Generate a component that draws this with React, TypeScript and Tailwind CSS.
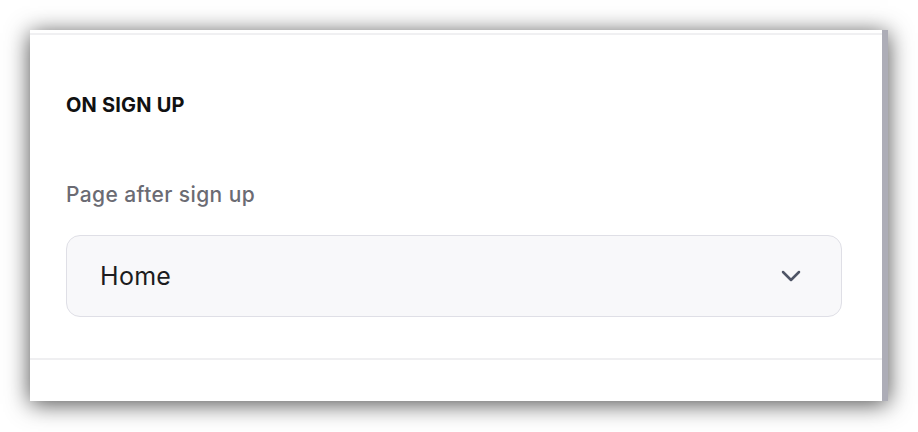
export default function App() {
  return (
    <div className="h-[432px] w-[918px] bg-white pl-[30px] pt-[30px] font-['Inter',sans-serif]">
      <div className="flex h-[371px] w-[858px] shadow-[0_3px_22px_rgba(0,0,0,0.7)]">
        {/* card body */}
        <div className="flex w-[852px] flex-col bg-white">
          <div className="mt-[3px] h-[2px] bg-[#f0f0f2]" />

          <section className="px-[36px] pt-[58px]">
            <h2 className="text-[20px] font-bold leading-6 tracking-[0.2px] text-[#111111]">
              ON SIGN UP
            </h2>

            <label className="mt-[64px] block text-[21px] font-medium leading-7 tracking-[0.4px] text-[#6b6b73]">
              Page after sign up
            </label>

            <button
              type="button"
              className="mt-[26px] flex h-[82px] w-[776px] items-center justify-between rounded-[14px] border border-[#dfdfe6] bg-[#f8f8fa] pl-[33px] pr-[40px] text-left"
            >
              <span className="text-[25px] leading-8 tracking-[0.3px] text-[#1c1c20]">Home</span>
              <svg
                width="20"
                height="12"
                viewBox="0 0 20 12"
                fill="none"
                stroke="#4f5566"
                strokeWidth="2.5"
                strokeLinecap="round"
                strokeLinejoin="round"
              >
                <path d="M2 2 L10 10 L18 2" />
              </svg>
            </button>
          </section>

          <div className="mt-[41px] h-[2px] bg-[#efeff1]" />
          <div className="flex-1" />
        </div>

        {/* scrollbar edge */}
        <div className="w-[6px] bg-[#adadb7]" />
      </div>
    </div>
  );
}
